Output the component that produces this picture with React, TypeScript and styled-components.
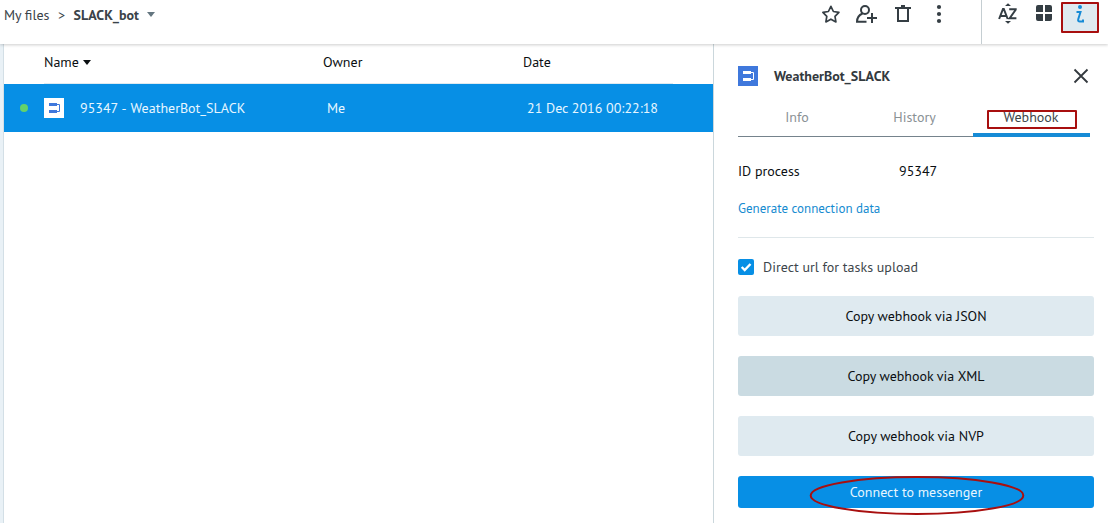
import React from "react";
import styled, { createGlobalStyle } from "styled-components";

const GlobalStyle = createGlobalStyle`
  * { box-sizing: border-box; }
  body { margin: 0; background: #fff; overflow: hidden; }
  button { font: inherit; border: 0; padding: 0; background: none; }
`;

const Page = styled.div`
  display: flex;
  flex-direction: column;
  width: 1108px;
  height: 523px;
  overflow: hidden;
  font-family: "PT Sans", "Noto Sans", sans-serif;
  font-size: 14px;
  line-height: 20px;
  color: #0b0f12;
  white-space: nowrap;
`;

const TopBar = styled.header`
  display: flex;
  flex: none;
  height: 44px;
  background: #fff;
  box-shadow: 0 1px 3px rgba(0, 0, 0, 0.2);
  z-index: 1;
`;

const Breadcrumb = styled.nav`
  display: flex;
  flex: 1;
  padding: 5px 0 0 4px;
  color: #3a4349;
`;

const Separator = styled.span`
  width: 24px;
  text-align: center;
`;

const Current = styled.strong`
  margin-right: 8px;
`;

const Caret = styled.i<{ $color: string }>`
  width: 0;
  height: 0;
  border: 4px solid transparent;
  border-top: 5px solid ${(p) => p.$color};
  border-bottom: 0;
`;

const BreadCaret = styled(Caret)`
  margin-top: 7px;
`;

const Actions = styled.div`
  display: flex;
  width: 163px;
  padding-top: 4px;
`;

const ViewOptions = styled.div`
  display: flex;
  width: 127px;
  border-left: 1px solid #c5ced2;
  padding: 2px 0 0 14px;
`;

const IconButton = styled.button<{ $width: number; $height?: number }>`
  display: block;
  flex: none;
  width: ${(p) => p.$width}px;
  height: ${(p) => p.$height ?? 24}px;
  svg { display: block; }
`;

const InfoButton = styled(IconButton)`
  display: flex;
  justify-content: center;
  border: 2px solid #a80f0f;
  border-radius: 1px;
  background: #dfeaf0;
`;

const Body = styled.main`
  display: flex;
  flex: 1;
`;

const Rail = styled.div`
  width: 4px;
  background: #e9f1f6;
  border-right: 1px solid #d3dfe6;
`;

const FileList = styled.section`
  width: 709px;
`;

const columns = `
  display: grid;
  grid-template-columns: 279px 200px 1fr;
`;

const ListHead = styled.div`
  ${columns}
  height: 40px;
  margin: 0 40px;
  padding-top: 8px;
  border-bottom: 1px solid #dfeaf0;
`;

const NameHead = styled.div`
  display: flex;
  align-items: center;
  gap: 4px;
  height: 20px;
`;

const ListRow = styled.div`
  ${columns}
  align-items: center;
  height: 48px;
  padding-left: 40px;
  background: #078fe5;
  color: #e6f6ff;
`;

const NameCell = styled.div`
  display: flex;
  align-items: center;
  margin-left: -24px;
`;

const FileName = styled.span`
  margin-left: 16px;
  word-spacing: 1.6px;
`;

const Cell = styled.div`
  padding-left: 4px;
`;

const StatusDot = styled.i`
  width: 8px;
  height: 8px;
  margin-right: 16px;
  border-radius: 50%;
  background: #63d26b;
`;

const Details = styled.aside`
  display: flex;
  flex-direction: column;
  width: 395px;
  padding: 22px 14px 0 24px;
  border-left: 1px solid #cbd7dc;
`;

const TitleRow = styled.div`
  display: flex;
  align-items: center;
  height: 20px;
  color: #33393e;
`;

const Title = styled.h1`
  flex: 1;
  margin: 0 0 0 16px;
  font-size: 14px;
`;

const Close = styled.button`
  width: 20px;
  height: 20px;
  margin-right: 3px;
  svg { display: block; }
`;

const Tabs = styled.div`
  display: grid;
  grid-template-columns: 118px 117px 117px;
  width: 352px;
  height: 30px;
  margin-top: 21px;
`;

const Tab = styled.div<{ $active?: boolean }>`
  display: flex;
  justify-content: center;
  height: 30px;
  color: ${(p) => (p.$active ? "#3d464b" : "#8a9195")};
  border-bottom: ${(p) => (p.$active ? "4px solid #168bd6" : "1px solid #75838c")};
`;

const TabMark = styled.div`
  display: flex;
  justify-content: center;
  align-items: center;
  width: 90px;
  height: 19px;
  margin: 3px 0 0 1px;
  padding: 0 2px 4px 0;
  line-height: 15px;
  border: 2px solid #a80f0f;
  border-radius: 1px;
`;

const Field = styled.div`
  display: grid;
  grid-template-columns: 161px 1fr;
  margin-top: 24px;
`;

const Link = styled.a`
  margin-top: 18px;
  padding-bottom: 18px;
  border-bottom: 1px solid #dfe7ea;
  font-size: 13px;
  color: #168bd0;
`;

const CheckRow = styled.label`
  display: flex;
  align-items: center;
  gap: 9px;
  margin: 19px 0;
  color: #3d464b;
`;

const CheckBox = styled.span`
  width: 16px;
  height: 16px;
  border-radius: 2px;
  background: #078fe5;
  svg { display: block; }
`;

const Action = styled.button<{ $kind?: "hover" | "primary" }>`
  flex: none;
  height: ${(p) => (p.$kind === "primary" ? 32 : 40)}px;
  margin-bottom: 20px;
  border-radius: 3px;
  color: ${(p) => (p.$kind === "primary" ? "#e6f6ff" : "#0b0f12")};
  background: ${(p) =>
    p.$kind === "primary" ? "#078fe5" : p.$kind === "hover" ? "#cadbe2" : "#dfeaf0"};
`;

const PrimaryAction = styled(Action)`
  position: relative;
`;

const Ellipse = styled.svg`
  position: absolute;
  left: 71px;
  top: -1px;
  overflow: visible;
`;

const ProcessIcon = ({ bg, fg }: { bg: string; fg: string }) => (
  <svg width="20" height="20" viewBox="0 0 20 20">
    <rect width="20" height="20" fill={bg} />
    <path d="M5 5h8v3H5zM5 12h8v3H5z" fill={fg} />
    <path d="M13 6.500h2.500v7H13" fill="none" stroke={fg} />
  </svg>
);

export default function App() {
  return (
    <Page>
      <GlobalStyle />
      <TopBar>
        <Breadcrumb>
          <span>My files</span>
          <Separator>&gt;</Separator>
          <Current>SLACK_bot</Current>
          <BreadCaret $color="#647680" />
        </Breadcrumb>
        <Actions>
          <IconButton $width={35} aria-label="Favorite">
            <svg width="24" height="24" viewBox="0 0 24 24" fill="none" stroke="#353e44" strokeWidth="1.7" strokeLinejoin="round">
              <path d="M12.900 2.300l2.500 5.200 5.500.8-3.900 4 .9 5.600-5-2.700-5 2.700.9-5.600-3.900-4 5.500-.8z" />
            </svg>
          </IconButton>
          <IconButton $width={39} aria-label="Share">
            <svg width="24" height="24" viewBox="0 0 24 24" fill="none" stroke="#353e44" strokeWidth="2">
              <circle cx="12" cy="6" r="4" />
              <path d="M9.500 9.500C6 11 4 13.500 4 17.800h9.500M14 14h10M19 9v10" />
            </svg>
          </IconButton>
          <IconButton $width={36} aria-label="Delete">
            <svg width="24" height="24" viewBox="0 0 24 24" fill="none" stroke="#353e44" strokeWidth="2">
              <path d="M3 4h16M9 2h4M6 4v13h10V4" />
            </svg>
          </IconButton>
          <IconButton $width={24} aria-label="More">
            <svg width="24" height="24" viewBox="0 0 24 24" fill="#353e44">
              <circle cx="11" cy="3" r="2.1" />
              <circle cx="11" cy="10" r="2.1" />
              <circle cx="11" cy="17" r="2.1" />
            </svg>
          </IconButton>
        </Actions>
        <ViewOptions>
          <IconButton $width={36} aria-label="Sort by name">
            <svg width="24" height="24" viewBox="0 0 24 24" fill="none" stroke="#353e44" strokeWidth="2">
              <path d="M3.100 17L7 7h.8l3.900 10M4.700 14h5.500M13.200 7.200h6.500v.6l-6 8.400h6.700" />
              <path d="M9 4l3-2.800L15 4zM9 19h6l-3 2.800z" fill="#353e44" stroke="none" />
            </svg>
          </IconButton>
          <IconButton $width={29} aria-label="Grid view">
            <svg width="24" height="24" viewBox="0 0 24 24" fill="#353e44">
              <path d="M6 3h5v7H4V5q0-2 2-2zM13 3h5q2 0 2 2v5h-7zM4 12h7v7H6q-2 0-2-2zM13 12h7v5q0 2-2 2h-5z" />
            </svg>
          </IconButton>
          <InfoButton $width={38} $height={31} aria-label="Details">
            <svg width="24" height="24" viewBox="0 0 24 24" fill="none" stroke="#168bd6" strokeWidth="2">
              <circle cx="12" cy="3" r="2" fill="#168bd6" stroke="none" />
              <path d="M8.500 8h4L10.300 15q-.8 2.500 1.700 2.500h3v-2" />
            </svg>
          </InfoButton>
        </ViewOptions>
      </TopBar>
      <Body>
        <Rail />
        <FileList>
          <ListHead>
            <NameHead>
              <span>Name</span>
              <Caret $color="#0b0f12" />
            </NameHead>
            <span>Owner</span>
            <span>Date</span>
          </ListHead>
          <ListRow>
            <NameCell>
              <StatusDot />
              <ProcessIcon bg="#fff" fg="#3f78dc" />
              <FileName>95347 - WeatherBot_SLACK</FileName>
            </NameCell>
            <Cell>Me</Cell>
            <Cell>21 Dec 2016 00:22:18</Cell>
          </ListRow>
        </FileList>
        <Details>
          <TitleRow>
            <ProcessIcon bg="#3f78dc" fg="#fff" />
            <Title>WeatherBot_SLACK</Title>
            <Close aria-label="Close">
              <svg width="20" height="20" viewBox="0 0 20 20" fill="none" stroke="#33393e" strokeWidth="1.8">
                <path d="M3.500 3.500l13 13M16.500 3.500l-13 13" />
              </svg>
            </Close>
          </TitleRow>
          <Tabs>
            <Tab>Info</Tab>
            <Tab>History</Tab>
            <Tab $active>
              <TabMark>Webhook</TabMark>
            </Tab>
          </Tabs>
          <Field>
            <span>ID process</span>
            <span>95347</span>
          </Field>
          <Link>Generate connection data</Link>
          <CheckRow>
            <CheckBox>
              <svg width="16" height="16" viewBox="0 0 16 16" fill="none" stroke="#fff" strokeWidth="2.4">
                <path d="M3.700 8l3 3 5.800-6" />
              </svg>
            </CheckBox>
            <span>Direct url for tasks upload</span>
          </CheckRow>
          <Action>Copy webhook via JSON</Action>
          <Action $kind="hover">Copy webhook via XML</Action>
          <Action>Copy webhook via NVP</Action>
          <PrimaryAction $kind="primary">
            Connect to messenger
            <Ellipse width="214" height="40" viewBox="0 0 214 40">
              <ellipse cx="108" cy="20.500" rx="106.300" ry="18.500" fill="none" stroke="#a80f0f" strokeWidth="2" />
            </Ellipse>
          </PrimaryAction>
        </Details>
      </Body>
    </Page>
  );
}
